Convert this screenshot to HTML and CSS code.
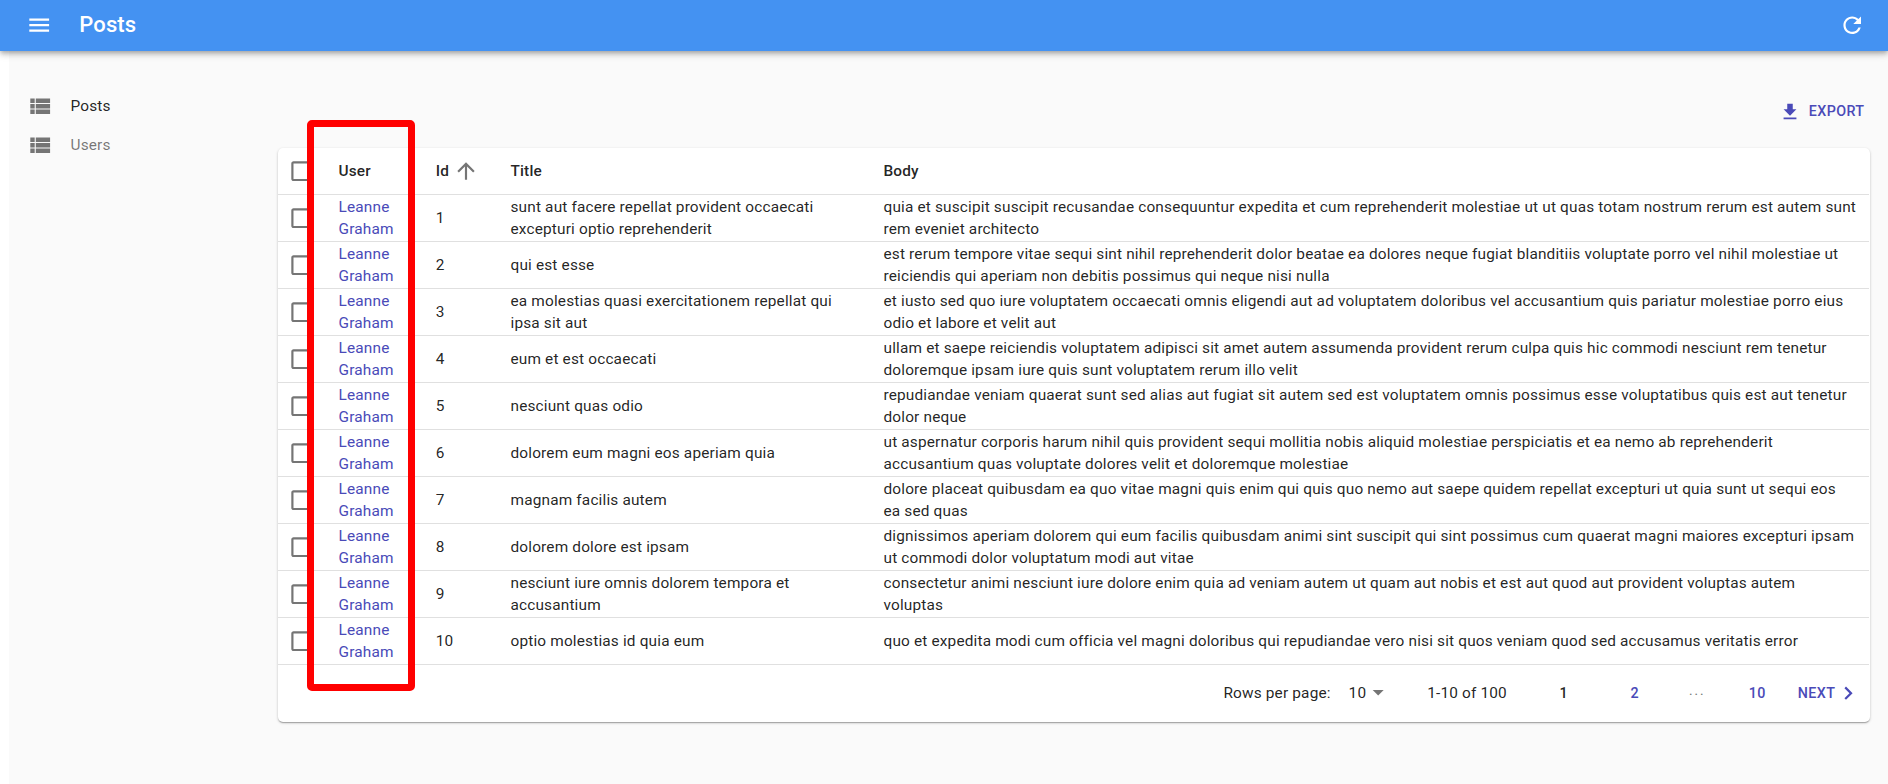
FILE: index.html
```html
<!DOCTYPE html>
<html lang="en">
<head>
<meta charset="utf-8">
<title>Posts</title>
<link rel="stylesheet" href="styles.css">
</head>
<body>
<svg class="defs" width="0" height="0">
  <symbol id="list" viewBox="0 0 24 24"><path d="M3 14h4v-4H3v4zm0 5h4v-4H3v4zM3 9h4V5H3v4zm5 5h13v-4H8v4zm0 5h13v-4H8v4zM8 5v4h13V5H8z"/></symbol>
  <symbol id="box" viewBox="0 0 24 24"><path d="M19 5v14H5V5h14m0-2H5c-1.1 0-2 .9-2 2v14c0 1.1.9 2 2 2h14c1.1 0 2-.9 2-2V5c0-1.1-.9-2-2-2z"/></symbol>
</svg>
<header class="appbar">
  <svg class="icon" viewBox="0 0 24 24"><path d="M3 18h18v-2H3v2zm0-5h18v-2H3v2zm0-7v2h18V6H3z"/></svg>
  <h1 class="appbar-title">Posts</h1>
  <svg class="icon" viewBox="0 0 24 24"><path d="M17.65 6.35C16.2 4.9 14.21 4 12 4c-4.42 0-7.99 3.58-7.99 8s3.57 8 7.99 8c3.73 0 6.84-2.55 7.73-6h-2.08c-.82 2.33-3.04 4-5.65 4-3.31 0-6-2.69-6-6s2.69-6 6-6c1.66 0 3.14.69 4.22 1.78L13 11h7V4l-2.35 2.35z"/></svg>
</header>
<div class="page">
  <nav class="sidebar">
    <a class="nav-item active"><svg class="icon"><use href="#list"/></svg>Posts</a>
    <a class="nav-item"><svg class="icon"><use href="#list"/></svg>Users</a>
  </nav>
  <main class="content">
    <div class="toolbar">
      <a class="export"><svg class="icon" viewBox="0 0 24 24"><path d="M19 9h-4V3H9v6H5l7 7 7-7zM5 18v2h14v-2H5z"/></svg>EXPORT</a>
    </div>
    <section class="card">
      <div class="table">
        <div class="row head"><svg class="icon"><use href="#box"/></svg><span>User</span><span class="sort">Id<svg class="arrow" viewBox="0 0 24 24"><path d="M4 12l1.41 1.41L11 7.83V20h2V7.83l5.58 5.59L20 12l-8-8-8 8z"/></svg></span><span>Title</span><span>Body</span></div>
        <div class="row"><svg class="icon"><use href="#box"/></svg><a class="user">Leanne<br>Graham</a><span>1</span><span>sunt aut facere repellat provident occaecati<br>excepturi optio reprehenderit</span><span>quia et suscipit suscipit recusandae consequuntur expedita et cum reprehenderit molestiae ut ut quas totam nostrum rerum est autem sunt<br>rem eveniet architecto</span></div>
        <div class="row"><svg class="icon"><use href="#box"/></svg><a class="user">Leanne<br>Graham</a><span>2</span><span>qui est esse</span><span>est rerum tempore vitae sequi sint nihil reprehenderit dolor beatae ea dolores neque fugiat blanditiis voluptate porro vel nihil molestiae ut<br>reiciendis qui aperiam non debitis possimus qui neque nisi nulla</span></div>
        <div class="row"><svg class="icon"><use href="#box"/></svg><a class="user">Leanne<br>Graham</a><span>3</span><span>ea molestias quasi exercitationem repellat qui<br>ipsa sit aut</span><span>et iusto sed quo iure voluptatem occaecati omnis eligendi aut ad voluptatem doloribus vel accusantium quis pariatur molestiae porro eius<br>odio et labore et velit aut</span></div>
        <div class="row"><svg class="icon"><use href="#box"/></svg><a class="user">Leanne<br>Graham</a><span>4</span><span>eum et est occaecati</span><span>ullam et saepe reiciendis voluptatem adipisci sit amet autem assumenda provident rerum culpa quis hic commodi nesciunt rem tenetur<br>doloremque ipsam iure quis sunt voluptatem rerum illo velit</span></div>
        <div class="row"><svg class="icon"><use href="#box"/></svg><a class="user">Leanne<br>Graham</a><span>5</span><span>nesciunt quas odio</span><span>repudiandae veniam quaerat sunt sed alias aut fugiat sit autem sed est voluptatem omnis possimus esse voluptatibus quis est aut tenetur<br>dolor neque</span></div>
        <div class="row"><svg class="icon"><use href="#box"/></svg><a class="user">Leanne<br>Graham</a><span>6</span><span>dolorem eum magni eos aperiam quia</span><span>ut aspernatur corporis harum nihil quis provident sequi mollitia nobis aliquid molestiae perspiciatis et ea nemo ab reprehenderit<br>accusantium quas voluptate dolores velit et doloremque molestiae</span></div>
        <div class="row"><svg class="icon"><use href="#box"/></svg><a class="user">Leanne<br>Graham</a><span>7</span><span>magnam facilis autem</span><span>dolore placeat quibusdam ea quo vitae magni quis enim qui quis quo nemo aut saepe quidem repellat excepturi ut quia sunt ut sequi eos<br>ea sed quas</span></div>
        <div class="row"><svg class="icon"><use href="#box"/></svg><a class="user">Leanne<br>Graham</a><span>8</span><span>dolorem dolore est ipsam</span><span>dignissimos aperiam dolorem qui eum facilis quibusdam animi sint suscipit qui sint possimus cum quaerat magni maiores excepturi ipsam<br>ut commodi dolor voluptatum modi aut vitae</span></div>
        <div class="row"><svg class="icon"><use href="#box"/></svg><a class="user">Leanne<br>Graham</a><span>9</span><span>nesciunt iure omnis dolorem tempora et<br>accusantium</span><span>consectetur animi nesciunt iure dolore enim quia ad veniam autem ut quam aut nobis et est aut quod aut provident voluptas autem<br>voluptas</span></div>
        <div class="row"><svg class="icon"><use href="#box"/></svg><a class="user">Leanne<br>Graham</a><span>10</span><span>optio molestias id quia eum</span><span>quo et expedita modi cum officia vel magni doloribus qui repudiandae vero nisi sit quos veniam quod sed accusamus veritatis error</span></div>
      </div>
      <footer class="pager">
        <span class="rows-label">Rows per page:</span>
        <span class="rows-value">10<svg class="icon" viewBox="0 0 24 24"><path d="M7 10l5 5 5-5z"/></svg></span>
        <span class="range">1-10 of 100</span>
        <span class="page-no current">1</span>
        <span class="page-no second">2</span>
        <span class="dots">...</span>
        <span class="page-no last">10</span>
        <span class="next">NEXT<svg class="icon" viewBox="0 0 24 24"><path d="M10 6L8.59 7.41 13.17 12l-4.58 4.59L10 18l6-6z"/></svg></span>
      </footer>
    </section>
  </main>
</div>
<div class="highlight"></div>
</body>
</html>
```
FILE: styles.css
```css
* { box-sizing: border-box; }
body {
  margin: 0;
  height: 784px;
  overflow: hidden;
  background: #fff;
  color: rgba(0, 0, 0, .87);
  font: 400 15.4px/22px Roboto, sans-serif;
  letter-spacing: .01071em;
}
.defs { position: absolute; }
.icon { width: 26.4px; height: 26.4px; flex: none; fill: currentColor; }
.appbar {
  position: relative;
  z-index: 2;
  display: flex;
  align-items: center;
  height: 51px;
  padding: 0 22.6px 2px 26.4px;
  background: #4492f2;
  color: #fff;
  box-shadow: 0 2px 4px -1px rgba(0,0,0,.2), 0 4px 5px 0 rgba(0,0,0,.14), 0 1px 11px 0 rgba(0,0,0,.12);
}
.appbar .icon { margin-top: 1px; }
.appbar-title {
  flex: 1;
  margin: 0 0 0 26.4px;
  font-size: 22px;
  font-weight: 500;
  line-height: 35px;
  letter-spacing: .0075em;
}
.page {
  display: flex;
  height: 733px;
  margin-left: 9px;
  background: #fafafa;
}
.sidebar {
  width: 269px;
  padding-top: 35.5px;
}
.nav-item {
  display: flex;
  align-items: center;
  gap: 17.1px;
  height: 39.3px;
  padding-left: 18px;
  color: rgba(0, 0, 0, .54);
}
.nav-item.active { color: rgba(0, 0, 0, .87); }
.nav-item .icon { color: #757575; }
.content { width: 1592px; }
.toolbar {
  display: flex;
  justify-content: flex-end;
  height: 97px;
  padding: 48px 5.5px 0 0;
}
.export {
  display: flex;
  align-items: center;
  gap: 7.5px;
  height: 24px;
  color: #4a4ab8;
  font-size: 14.3px;
  font-weight: 500;
  letter-spacing: .02857em;
}
.export .icon { width: 22px; height: 22px; margin-top: 1px; }
.card {
  height: 574px;
  border-radius: 5px;
  background: #fff;
  box-shadow: 0 1px 3px 0 rgba(0,0,0,.2), 0 1px 1px 0 rgba(0,0,0,.14), 0 2px 1px -1px rgba(0,0,0,.12);
}
.table { width: 1591px; }
.row {
  display: grid;
  grid-template-columns: 50.5px 97.2px 74.8px 373px 1fr;
  align-items: center;
  height: 47px;
  padding-left: 10px;
  border-bottom: 1px solid #e0e0e0;
  white-space: nowrap;
}
.row > .icon { margin-bottom: .5px; color: #757575; }
.head { font-weight: 500; }
.sort { display: flex; align-items: center; }
.arrow { width: 26px; height: 26px; margin-left: 4.4px; fill: #757575; }
.user, .next, .page-no { color: #4a4ab8; }
.pager {
  display: flex;
  align-items: center;
  height: 57px;
  padding: 0 0 1px 945.4px;
}
.rows-label { width: 125.2px; }
.rows-value { display: flex; align-items: center; width: 78.6px; }
.rows-value .icon { margin: 0 0 2px -1px; color: #757575; }
.range { width: 132.4px; }
.page-no { width: 71px; font-size: 14.3px; font-weight: 500; letter-spacing: .02857em; }
.page-no.current { color: rgba(0, 0, 0, .87); }
.page-no.second { width: 58.2px; }
.dots { width: 60px; padding-bottom: 6px; color: rgba(0, 0, 0, .54); letter-spacing: 1.4px; }
.page-no.last { width: 49px; }
.next { display: flex; align-items: center; font-size: 14.3px; font-weight: 500; letter-spacing: .02857em; }
.highlight {
  position: absolute;
  z-index: 3;
  left: 307.4px;
  top: 120.3px;
  width: 107.8px;
  height: 571px;
  border: 7px solid #f00;
  border-radius: 5px;
}
```
